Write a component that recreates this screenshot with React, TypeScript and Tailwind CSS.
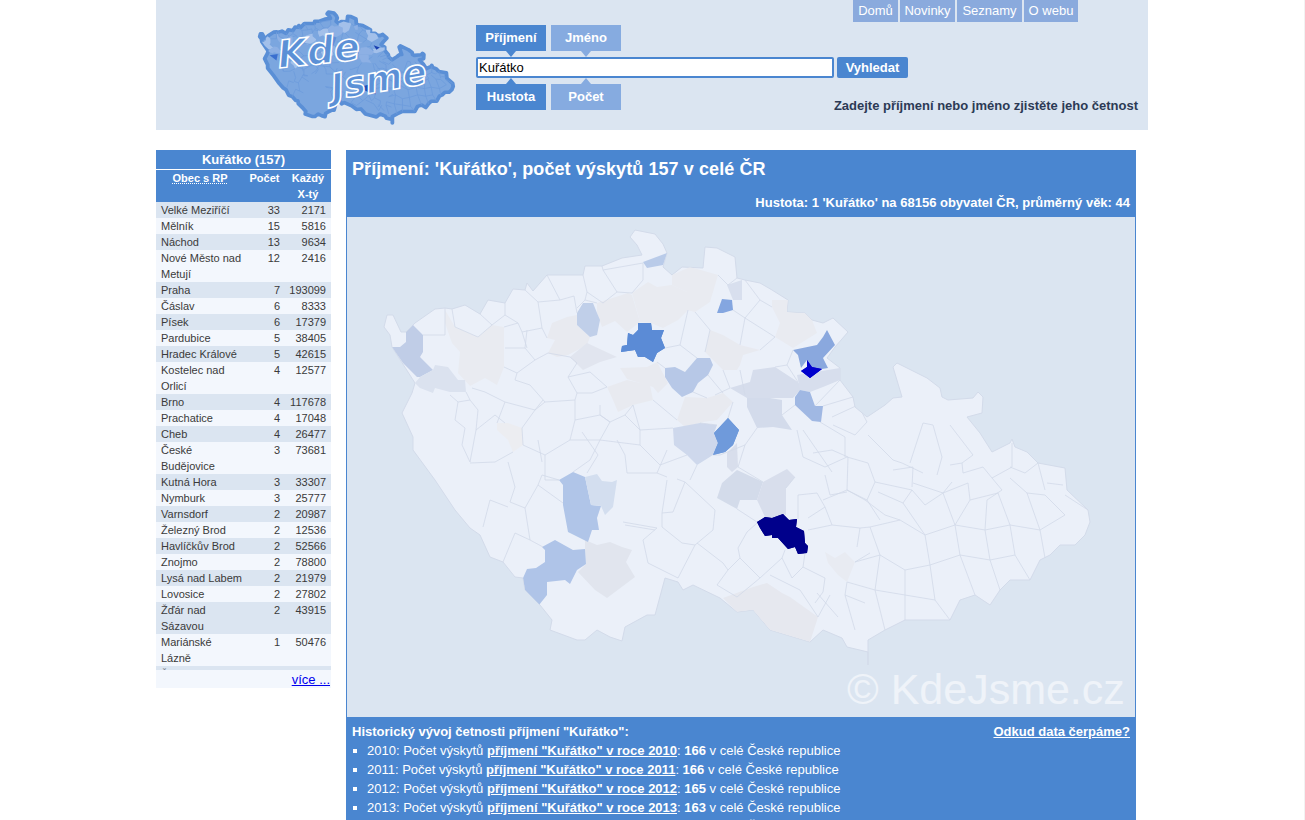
import React from 'react';

const outline =
  '387,315 393,315 401,332 406,332 413,325 415,323 435,309 445,308 452,309 465,305 480,314 488,300 505,303 513,289 525,290 527,283 533,291 547,275 583,275 585,266 602,266 622,258 642,255 637,245 630,237 635,230 655,234 663,244 667,253 663,267 672,275 682,267 703,268 705,247 717,248 735,257 737,278 745,280 760,283 772,290 788,300 787,312 805,313 812,320 823,323 833,318 848,332 835,347 827,358 840,368 840,380 853,397 855,407 867,417 885,405 893,398 902,397 893,367 897,363 927,378 940,388 942,397 948,400 973,398 978,392 983,397 982,413 967,417 980,433 992,452 1010,443 1012,439 1015,447 1027,452 1038,463 1065,468 1067,490 1088,510 1090,522 1085,535 1075,545 1060,545 1050,555 1040,560 1030,580 1010,580 1000,590 990,605 975,595 960,600 950,620 930,620 905,620 885,630 868,640 868,665 868,652 847,647 842,638 823,630 810,642 770,630 753,610 737,612 720,598 693,585 683,590 678,582 665,578 655,615 647,615 625,627 622,641 610,637 597,630 585,640 577,640 550,630 552,620 540,605 525,590 523,578 515,577 503,562 490,557 480,535 470,528 455,510 435,480 413,450 413,437 402,413 412,393 415,383 392,347 390,335 384,327';

const patches: [string, string][] = [
  ['#e9ebf1', '445,310 455,327 478,337 492,325 504,327 504,367 497,385 485,378 470,386 458,373 460,352 452,343 445,323'],
  ['#c0cde7', '413,325 423,335 423,352 420,357 433,370 420,377 417,377 403,363 392,347 400,347 406,342 406,332'],
  ['#dbe2ef', '435,365 448,367 458,380 465,380 466,392 450,392 435,388 433,393 420,388 415,383 420,377 433,370'],
  ['#e8eaf0', '567,317 577,315 577,325 590,337 587,345 568,355 557,357 548,353 555,340 547,338 552,323'],
  ['#e1e5ef', '587,343 617,357 600,362 583,370 570,357'],
  ['#e8eaf0', '597,303 628,293 632,295 640,322 627,332 615,321 602,327 597,313'],
  ['#e9ebf1', '632,293 648,282 657,287 672,285 687,292 688,310 678,320 663,328 651,323 640,322'],
  ['#e9ebf1', '672,275 690,267 718,275 710,302 695,312 687,310 687,292 672,285'],
  ['#d8dfee', '727,285 742,280 742,300 733,300'],
  ['#e9ebf1', '772,300 788,300 787,312 805,313 812,320 817,333 793,348 775,337 780,323 772,307'],
  ['#e8eaf0', '710,330 723,335 740,345 760,350 743,355 740,365 737,370 723,370 705,352'],
  ['#e8eaf0', '607,387 627,380 650,385 653,400 633,405 618,412 613,400'],
  ['#e8eaf0', '620,368 647,367 657,362 668,383 658,393 653,387 627,379'],
  ['#e8eaf0', '677,420 685,397 707,398 723,393 733,402 717,420 703,422 685,427'],
  ['#d6ddec', '753,370 775,367 798,382 802,388 793,398 770,398 747,398 730,388 750,382'],
  ['#d7deed', '797,375 840,368 840,380 823,387 810,392 800,390'],
  ['#d3dbeb', '747,398 770,398 782,400 782,415 792,430 773,427 757,428 747,407'],
  ['#ecedf1', '497,423 508,423 522,428 523,445 513,452 508,440 497,430'],
  ['#ced8ec', '673,428 700,423 717,425 714,433 718,443 713,455 697,465 687,455 674,445'],
  ['#d3dbea', '737,470 763,482 757,500 740,500 737,509 717,498 722,483'],
  ['#d8deec', '787,469 795,477 786,488 786,515 783,514 772,518 765,517 757,500 763,482'],
  ['#d8deec', '727,453 737,443 738,467 732,472 727,467'],
  ['#e6e8ef', '723,598 753,587 767,583 782,593 790,597 818,617 810,642 770,630 753,610 737,612'],
  ['#e8ebf2', '825,552 835,558 845,552 855,562 847,582 838,575 828,563'],
  ['#e1e5ee', '585,540 597,545 610,542 622,547 632,550 626,562 635,577 607,598 595,590 578,572 586,564 585,549'],
  ['#b9cbe9', '643,262 667,253 663,265 647,268'],
  ['#84a6e0', '722,299 732,300 733,310 723,313 717,313'],
  ['#c0cfe9', '583,303 593,303 597,313 600,320 597,335 590,337 577,325 577,313'],
  ['#b7c8e7', '665,368 675,367 685,372 697,358 710,358 713,365 708,375 698,383 693,392 682,397 672,388 665,377'],
  ['#b0c5e8', '573,472 585,477 591,505 601,506 597,518 599,530 592,530 588,542 568,532 563,505 563,485 559,480'],
  ['#d3deef', '585,477 597,474 602,481 612,482 617,480 613,507 605,515 601,506 591,505'],
  ['#afc4e8', '555,540 573,550 585,549 586,564 577,570 570,584 565,580 547,582 547,595 539,605 525,590 523,578 527,569 536,568 545,562 545,550 542,547'],
  ['#a0b8e3', '800,390 810,392 815,406 823,406 821,422 812,421 795,405 795,397'],
  ['#8aa8de', '827,330 835,345 823,358 828,368 822,369 812,367 807,360 801,368 798,355 793,350 817,345 823,337'],
  ['#6f9adb', '728,418 739,430 733,445 725,452 713,455 718,443 714,433'],
  ['#5b8bd6', '638,323 651,323 652,330 664,330 661,338 665,348 657,353 653,362 645,357 638,357 635,350 621,352 622,346 627,345 628,333 633,335 638,330'],
  ['#0000cd', '807,360 812,367 822,369 810,378 801,371 807,367'],
  ['#00008b', '757,522 765,517 772,518 783,514 789,520 797,519 796,527 804,531 805,543 808,546 807,553 798,554 795,547 788,549 778,538 772,538 772,535 765,536 760,528'],
];

const borders =
  'M423 335L445 335M445 308L445 335M452 309L455 327L478 337L492 325L480 314M505 303L505 315L518 323L522 332L542 328L538 302L525 290M492 325L505 315M504 327L518 323M527 330L525 348L505 348M525 348L535 360L517 373L504 367M538 302L560 300L547 275M560 300L574 296L577 313M583 275L587 292L585 300L597 303M585 300L577 308M587 292L603 303L617 292L603 270L602 266M617 292L632 293L643 280L643 263L603 270M542 328L547 338M522 332L527 348M517 373L515 380L530 385L545 402L575 400L577 393L568 377L577 363L570 357L548 353L535 360M568 377L590 372L607 387M577 393L592 393L607 387M600 405L600 415L610 422M466 392L470 400L458 402L450 395M472 388L485 392L505 402L535 410L543 400M458 402L455 420L465 428L462 445L470 462M470 400L478 410L476 430L495 415L505 423M476 430L470 462M505 402L497 423M535 410L522 428L523 445L545 455L570 440L575 420L575 400M545 402L535 410M575 420L600 415L610 422L600 440L570 440M610 422L625 415L633 405M625 415L640 430L640 445L600 440M640 430L673 428M640 445L660 465L687 455M600 440L590 460L573 472M545 455L545 480L559 480M513 452L495 462L470 463M625 525L655 530M740 370L745 395M730 388L715 395M723 370L730 388M697 358L680 345L665 348M680 345L688 310M710 330L695 312M705 352L710 330M737 278L728 285L718 275M733 310L745 318L760 300L745 280M760 300L772 307M745 318L775 337M745 318L740 345M760 350L775 337M793 350L787 365L775 367M787 365L798 382M840 380L815 406M853 397L823 406M782 415L795 405M757 428L745 445L738 467M745 445L720 455L713 455M697 465L690 480M657 362L665 368M653 400L677 420M633 405L640 430M708 375L723 393M733 402L728 418M693 392L707 398M738 467L763 482M795 477L786 488M737 509L757 522M700 423L717 425' +
  'M508 462L515 487L510 502L525 508L538 485M490 500L483 527M490 500L508 507M515 533L530 540L525 508M503 562L515 533M530 540L543 547M542 475L538 485L563 503M542 475L559 480M538 440L542 462M582 432L598 455L587 473M617 440L625 455L627 473L657 473L667 477M667 450L657 473M667 480L662 513L673 512L685 482L677 479M662 513L662 527L682 543L695 545M623 522L657 528L643 540L648 563L678 578L695 545M685 482L715 510L713 530L695 545M697 543L723 563L728 570L717 585M728 570L740 558L760 578L737 597L717 585M738 548L747 532L757 523M738 548L740 558M760 578L782 558L785 550M782 558L792 578L803 567L805 553M803 567L825 578L823 592L815 603M798 495L817 493L825 507L808 518M798 495L798 519M823 500L847 490L865 500M832 525L860 528L870 527M832 525L825 507M808 530L832 525M860 528L857 547M848 457L847 490M803 430L832 472M813 453L832 450L848 457M817 593L838 617M855 562L870 553M847 582L845 595L865 603' +
  'M832 417L858 405L867 422L855 435L833 425M868 435L893 460L902 463L923 473M923 423L910 463M923 423L933 425L942 457L937 475M950 425L973 455L962 463L950 465M962 463L963 473L983 467L992 478M1012 443L1012 467L992 478M1010 467L1025 473L1038 463M1038 463L1045 490M1063 485L1047 483M1010 478L1027 493L1045 495M992 478L1002 490L987 500M968 483L970 500L998 493M912 487L913 467L893 470M913 483L943 493L952 482M943 493L968 483M847 457L868 463L875 482L867 500L847 490M875 482L912 490L903 503L878 492M830 495L847 492M825 475L830 495M803 457L825 467L847 457M797 430L803 457M820 422L845 437L845 457' +
  'M870 527L900 520L925 535L955 525L985 530L1010 525L1040 530L1065 515M865 500L885 515L900 520M867 500L880 520M903 503L925 535M925 535L930 565L905 570L880 555L870 527M955 525L960 555L930 565M985 530L990 560L960 555M1010 525L1015 555L990 560M1040 530L1045 558M1015 555L1030 580M990 560L1000 590M960 555L975 595M930 565L935 600L950 620M905 570L905 620M880 555L875 590L885 630M875 590L905 595M935 600L905 595M855 562L880 555M847 582L875 590M845 595L855 630M1065 495L1088 510M1045 495L1065 515M998 493L1010 525M970 500L955 525M987 500L985 530M1027 493L1040 530M943 493L955 525M912 490L925 505L943 493M770 575L800 590M800 590L818 617M818 617L830 595';

const rows: [string, number, number][] = [
  ['Velké Meziříčí', 33, 2171], ['Mělník', 15, 5816], ['Náchod', 13, 9634],
  ['Nové Město nad Metují', 12, 2416], ['Praha', 7, 193099], ['Čáslav', 6, 8333],
  ['Písek', 6, 17379], ['Pardubice', 5, 38405], ['Hradec Králové', 5, 42615],
  ['Kostelec nad Orlicí', 4, 12577], ['Brno', 4, 117678], ['Prachatice', 4, 17048],
  ['Cheb', 4, 26477], ['České Budějovice', 3, 73681], ['Kutná Hora', 3, 33307],
  ['Nymburk', 3, 25777], ['Varnsdorf', 2, 20987], ['Železný Brod', 2, 12536],
  ['Havlíčkův Brod', 2, 52566], ['Znojmo', 2, 78800], ['Lysá nad Labem', 2, 21979],
  ['Lovosice', 2, 27802], ['Žďár nad Sázavou', 2, 43915], ['Mariánské Lázně', 1, 50476],
  ['Žamberk', 1, 20512],
];

const history: [number, number][] = [[2010, 166], [2011, 166], [2012, 165], [2013, 163], [2014, 157]];

const Logo = () => (
  <svg width="200" height="130" viewBox="0 0 200 130" className="block">
    <g transform="translate(4 12) scale(0.274 0.255) translate(-385 -230)">
      <polygon points={outline} fill="#7ba6df" stroke="#5a8fd6" strokeWidth="14" strokeLinejoin="round" />
      {patches.slice(0, 18).map((p, i) => (
        <polygon key={i} points={p[1]} fill={i % 2 ? '#a3c0ea' : '#8db0e4'} />
      ))}
      <path d={borders} fill="none" stroke="#6c9bdc" strokeWidth="3" />
      <polygon points="757,522 783,514 804,531 807,553 788,549 765,536" fill="#1f4fb8" />
      <polygon points="621,352 638,323 664,330 653,362" fill="#5f8fd8" />
      <polygon points="800,360 822,369 810,378" fill="#1a3fb0" />
      <polygon points="420,400 450,395 445,420" fill="#3a6fcf" />
    </g>
    <text
      x="23"
      y="68"
      transform="rotate(-6 23 68)"
      fontFamily="'DejaVu Sans', sans-serif"
      fontStyle="italic"
      fontWeight="bold"
      fontSize="38"
      fill="#5b90d6"
      stroke="#ffffff"
      strokeWidth="1.5"
    >
      Kde
    </text>
    <text
      x="77"
      y="100"
      transform="rotate(-10 77 100)"
      fontFamily="'DejaVu Sans', sans-serif"
      fontStyle="italic"
      fontWeight="bold"
      fontSize="36"
      fill="#5b90d6"
      stroke="#ffffff"
      strokeWidth="1.5"
    >
      Jsme
    </text>
  </svg>
);

const CzMap = () => (
  <svg width="788" height="500" viewBox="347 217 788 500" className="block">
    <defs>
      <clipPath id="cz">
        <polygon points={outline} />
      </clipPath>
    </defs>
    <polygon points={outline} fill="#ebf0f9" stroke="#d3dbea" strokeWidth="1" strokeLinejoin="round" />
    <g clipPath="url(#cz)">
      {patches.map((p, i) => (
        <polygon key={i} points={p[1]} fill={p[0]} />
      ))}
      <path d={borders} fill="none" stroke="#d2d9e9" strokeWidth="0.8" />
    </g>
    {patches.slice(-4).map((p, i) => (
      <polygon key={i} points={p[1]} fill={p[0]} />
    ))}
  </svg>
);

const Tab = ({ label, active, up }: { label: string; active?: boolean; up?: boolean }) => (
  <div
    className={`relative w-[70px] h-[26px] flex items-center justify-center font-bold text-[13px] text-white ${
      active ? 'bg-[#4a86d0]' : 'bg-[#86abe0]'
    }`}
  >
    {label}
    {up ? (
      <span
        className={`absolute left-[30px] -top-[6px] w-0 h-0 border-x-[5px] border-x-transparent border-b-[6px] ${
          active ? 'border-b-[#4a86d0]' : 'border-b-[#86abe0]'
        }`}
      />
    ) : (
      <span
        className={`absolute left-[30px] -bottom-[6px] w-0 h-0 border-x-[5px] border-x-transparent border-t-[6px] ${
          active ? 'border-t-[#4a86d0]' : 'border-t-[#86abe0]'
        }`}
      />
    )}
  </div>
);

const App = () => {
  return (
    <div className="relative w-full h-[820px] overflow-hidden bg-white font-['Liberation_Sans',Arial,sans-serif]">
      <div className="absolute right-0 top-0 h-full w-px bg-[#f2f2f2]" />

      {/* hlavicka */}
      <header className="ml-[156px] w-[992px] h-[130px] bg-[#dbe5f1] flex">
        <div className="w-[320px] pl-[100px]">
          <Logo />
        </div>
        <div className="flex-1 flex flex-col">
          <nav className="h-[22px] flex justify-end gap-[2px] pr-[70px] text-[13px] text-white">
            {[['Domů', 'w-[45px]'], ['Novinky', 'w-[55px]'], ['Seznamy', 'w-[65px]'], ['O webu', 'w-[54px]']].map(([t, w]) => (
              <a key={t} className={`${w} bg-[#8aaadd] flex items-center justify-center`}>
                {t}
              </a>
            ))}
          </nav>
          <div className="mt-[3px] flex gap-[5px]">
            <Tab label="Příjmení" active />
            <Tab label="Jméno" />
          </div>
          <div className="mt-[6px] flex gap-[3px]">
            <div className="w-[358px] h-[21px] bg-white border-2 border-[#4a86d0] rounded-[2px] flex items-center pl-[1px] text-[13px] text-black">
              Kuřátko
            </div>
            <button className="w-[71px] h-[21px] bg-[#4a86d0] rounded-[2px] text-white font-bold text-[13px]">Vyhledat</button>
          </div>
          <div className="mt-[6px] flex items-start">
            <div className="flex gap-[5px]">
              <Tab label="Hustota" active up />
              <Tab label="Počet" up />
            </div>
            <div className="ml-auto mr-[10px] mt-[14px] leading-[16px] font-bold text-[13px] text-[#2c3a55]">
              Zadejte příjmení nebo jméno zjistěte jeho četnost
            </div>
          </div>
        </div>
      </header>

      <div className="ml-[156px] mt-[20px] flex items-start gap-[15px]">
        {/* levy sloupec */}
        <aside className="w-[175px] text-[11px] text-[#3a3a3a]">
          <div className="h-[19px] bg-[#4a86d0] text-white font-bold text-[13px] leading-[19px] text-center">Kuřátko (157)</div>
          <div className="mt-px h-[32px] bg-[#4a86d0] text-white font-bold leading-[16px] grid grid-cols-[85px_44px_46px]">
            <div className="text-center pl-[3px]">
              <span className="underline decoration-dotted">Obec s RP</span>
            </div>
            <div className="text-center pl-[3px]">Počet</div>
            <div className="text-center">
              Každý
              <br />
              X-tý
            </div>
          </div>
          <div className="h-[468px] overflow-hidden leading-[16px]">
            {rows.map(([name, count, nth], i) => (
              <div key={name} className={`grid grid-cols-[88px_36px_46px_5px] ${i % 2 ? 'bg-[#f3f7fd]' : 'bg-[#dbe5f1]'}`}>
                <div className="pl-[5px]">{name}</div>
                <div className="text-right">{count}</div>
                <div className="text-right">{nth}</div>
              </div>
            ))}
          </div>
          <div className="h-[18px] bg-[#f3f7fd] text-right pr-px text-[13px] leading-[20px]">
            <a className="text-[#0000ee] underline">více ...</a>
          </div>
        </aside>

        {/* hlavni cast */}
        <main className="w-[790px] bg-[#4a86d0] text-white">
          <div className="h-[67px] px-[6px] flex flex-col">
            <h1 className="mt-[9px] font-bold text-[18px] leading-[21px] tracking-[0.08px]">Příjmení: 'Kuřátko', počet výskytů 157 v celé ČR</h1>
            <div className="mt-[15px] font-bold text-[13px] leading-[16px] text-right">
              Hustota: 1 'Kuřátko' na 68156 obyvatel ČR, průměrný věk: 44
            </div>
          </div>
          <div className="relative mx-px h-[500px] bg-[#dbe5f1]">
            <CzMap />
            <div className="absolute left-[500px] top-[448px] text-[43px] leading-[48px] text-white/55 whitespace-nowrap">
              © KdeJsme.cz
            </div>
          </div>
          <div className="px-[6px] pt-[7px] text-[13px] leading-[19px]">
            <div className="flex justify-between font-bold h-[17px] leading-[16px]">
              <span>Historický vývoj četnosti příjmení "Kuřátko":</span>
              <a className="underline">Odkud data čerpáme?</a>
            </div>
            <ul>
              {history.map(([year, n]) => (
                <li key={year} className="flex items-center">
                  <span className="ml-[1px] mr-[10px] w-[4px] h-[4px] bg-white" />
                  <span>
                    {year}: Počet výskytů{' '}
                    <a className="font-bold underline">příjmení "Kuřátko" v roce {year}</a>: <b>{n}</b> v celé České republice
                  </span>
                </li>
              ))}
            </ul>
          </div>
        </main>
      </div>
    </div>
  );
};

export default App;
